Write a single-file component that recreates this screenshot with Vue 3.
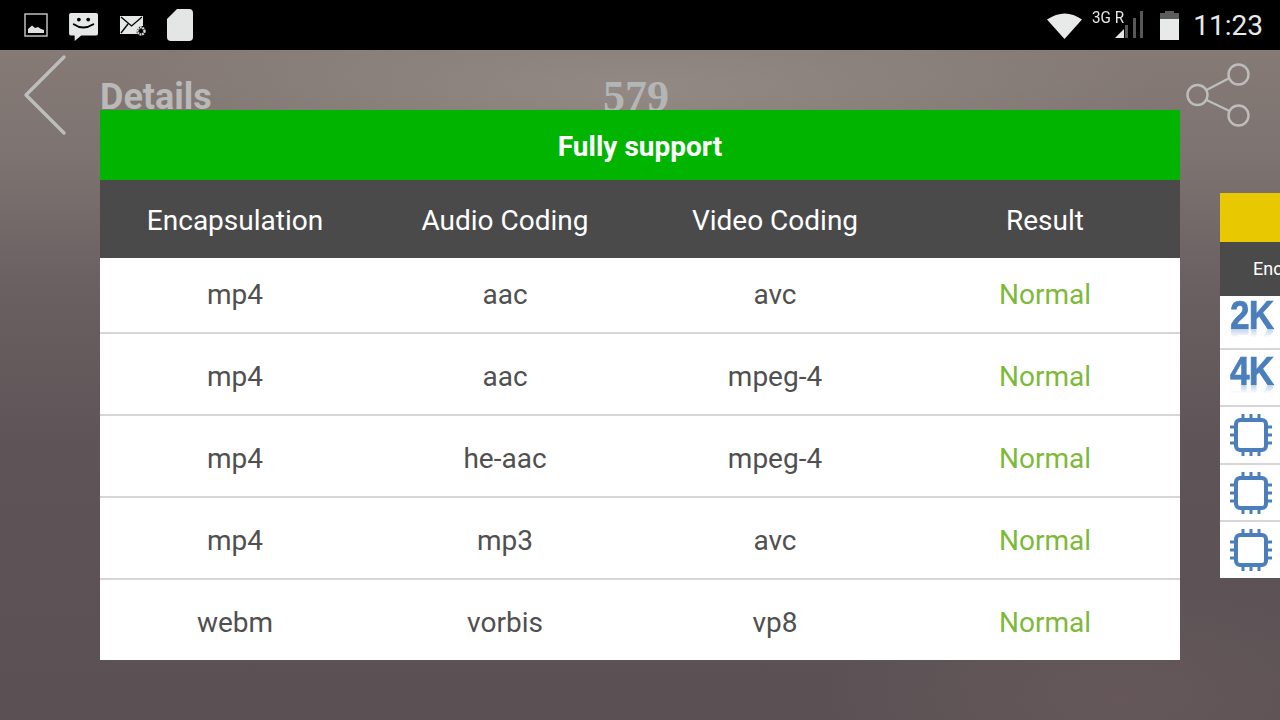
<script setup>
const rows = [
  ['mp4', 'aac', 'avc'],
  ['mp4', 'aac', 'mpeg-4'],
  ['mp4', 'he-aac', 'mpeg-4'],
  ['mp4', 'mp3', 'avc'],
  ['webm', 'vorbis', 'vp8'],
]
const heads = ['Encapsulation', 'Audio Coding', 'Video Coding', 'Result']
const chipPins = [13, 21, 29]
</script>

<template>
  <div class="screen">
    <div class="status">
      <div class="status-left">
        <svg class="ic" width="24" height="24" viewBox="0 0 24 24">
          <rect x="1" y="1" width="22" height="22" fill="none" stroke="#c9cbcb" stroke-width="1.4" />
          <path d="M4 20v-4l4-3.500 3 2.500 3-1 3 2 3 1v3z" fill="#dfe1e1" />
        </svg>
        <svg class="ic" width="30" height="28" viewBox="0 0 32 30">
          <path d="M2 0h27a2 2 0 0 1 2 2v20a2 2 0 0 1-2 2H13l-7 6v-6H2a2 2 0 0 1-2-2V2a2 2 0 0 1 2-2z" fill="#e6e8e8" />
          <circle cx="10.500" cy="7" r="2" fill="#000" />
          <circle cx="20.500" cy="7" r="2" fill="#000" />
          <path d="M5 12q10 7 21 0" fill="none" stroke="#000" stroke-width="2" stroke-linecap="round" />
        </svg>
        <svg class="ic" width="26" height="20" viewBox="0 0 26 20">
          <path d="M0 0h23v10a6 6 0 0 0-6 8H0z" fill="#e6e8e8" />
          <path d="M1 1l10.500 9L22 1M1 17l7-9" fill="none" stroke="#000" stroke-width="1.300" />
          <circle cx="21" cy="15" r="3.500" fill="none" stroke="#d5d7d7" stroke-width="2.400" stroke-dasharray="1.800 0.700" />
        </svg>
        <svg class="ic" width="26" height="32" viewBox="0 0 26 32">
          <path d="M10 0h12a4 4 0 0 1 4 4v24a4 4 0 0 1-4 4H4a4 4 0 0 1-4-4V10z" fill="#e4e6e6" />
        </svg>
      </div>
      <div class="status-right">
        <svg class="wifi" width="36" height="28" viewBox="0 0 36 28">
          <path d="M0 8.500Q18-3.500 35 8.500L17.500 28z" fill="#e8eaea" />
        </svg>
        <div class="net">
          <span class="net-label">3G R</span>
          <svg class="bars" width="30" height="28" viewBox="0 0 30 28">
            <path d="M0 27l9-9v9z" fill="#e6e8e8" />
            <path d="M10 27V14h3v13zM18 27V7h3v20zM25 27V0h3v27z" fill="#585858" />
          </svg>
        </div>
        <svg class="batt" width="19" height="29" viewBox="0 0 19 29">
          <path d="M5 2V0h9v2h5v7H0V2z" fill="#5c5c5c" />
          <rect y="8" width="19" height="21" fill="#e8eaea" />
        </svg>
        <span class="clock">11:23</span>
      </div>
    </div>

    <div class="body">
      <header class="bar">
        <svg class="back" width="44" height="82" viewBox="0 0 44 82">
          <path d="M41 3L3 41l38 38" fill="none" stroke="#bdbdbb" stroke-width="3.400" stroke-linecap="round" stroke-linejoin="round" />
        </svg>
        <span class="title">Details</span>
        <span class="num">579</span>
        <svg class="share" width="66" height="64" viewBox="0 0 66 64">
          <g fill="none" stroke="#bdbdbb" stroke-width="2.400">
            <circle cx="11.500" cy="32" r="10" />
            <circle cx="52.500" cy="11.500" r="10" />
            <circle cx="52.500" cy="52.500" r="10" />
            <path d="M20.500 27l23-12M20.500 37l23 11" />
          </g>
        </svg>
      </header>

      <div class="stage">
        <section class="dialog">
          <div class="banner">Fully support</div>
          <div class="thead">
            <span v-for="h in heads" :key="h">{{ h }}</span>
          </div>
          <div v-for="(r, i) in rows" :key="i" class="row">
            <span v-for="(c, j) in r" :key="j">{{ c }}</span>
            <span class="ok">Normal</span>
          </div>
        </section>

        <aside class="side">
          <div class="side-banner"></div>
          <div class="side-head">Encapsulation</div>
          <div class="side-row res-2k">
            <span class="res">2K</span>
          </div>
          <div class="side-row res-4k">
            <span class="res">4K</span>
          </div>
          <div v-for="n in 3" :key="n" class="side-row chip-row">
            <svg width="42" height="42" viewBox="0 0 42 42">
              <rect x="6" y="6" width="30" height="30" rx="4" fill="none" stroke="#4a7fbb" stroke-width="4" />
              <g stroke="#4a7fbb" stroke-width="3">
                <path v-for="p in chipPins" :key="p" :d="`M${p} 0v6M${p} 36v6M0 ${p}h6M36 ${p}h6`" />
              </g>
            </svg>
          </div>
        </aside>
      </div>
    </div>
  </div>
</template>

<style>
html, body { margin: 0; background: #000; }
</style>

<style scoped>
.screen {
  width: 1280px;
  height: 720px;
  overflow: hidden;
  display: flex;
  flex-direction: column;
  font-family: Roboto, "Liberation Sans", sans-serif;
}
.status {
  height: 50px;
  flex: none;
  background: #000;
  display: flex;
  justify-content: space-between;
  align-items: center;
  padding: 0 17px 0 24px;
}
.status-left { display: flex; align-items: center; }
.status-left .ic { margin-right: 21px; }
.status-left .ic:nth-child(2) { margin-top: 4px; }
.status-left .ic:nth-child(3) { margin-top: 2px; }
.status-right { display: flex; align-items: center; }
.wifi { margin-right: 9px; }
.net { position: relative; width: 53px; height: 34px; margin-right: 15px; }
.net-label {
  position: absolute; left: 0; top: 0;
  font-size: 16px; line-height: 19px; color: #e6e8e8; white-space: nowrap;
  transform: scaleX(0.95); transform-origin: left;
}
.bars { position: absolute; left: 23px; top: 3px; }
.batt { margin-right: 14px; }
.clock { font-size: 28px; color: #e8eaea; }

.body {
  position: relative;
  flex: 1;
  background:
    radial-gradient(ellipse 520px 90px at 640px 40px, rgba(160, 152, 146, 0.55), rgba(160, 152, 146, 0) 100%),
    radial-gradient(ellipse 300px 120px at 1120px 650px, rgba(120, 100, 100, 0.35), rgba(120, 100, 100, 0) 100%),
    linear-gradient(180deg, #857a76 0%, #7d7370 16%, #6a6062 35%, #5e5457 60%, #5b5154 100%);
}
.bar { position: relative; height: 60px; }
.back { position: absolute; left: 23px; top: 4px; }
.title {
  position: absolute; left: 100px; top: 26px;
  font-size: 36px; font-weight: 700; line-height: 42px; color: #b9b9b8;
}
.num {
  position: absolute; left: 603px; top: 26px;
  font-family: "Liberation Serif", serif;
  font-size: 44px; font-weight: 700; line-height: 42px; color: #b4b6b6;
}
.share { position: absolute; left: 1186px; top: 13px; }

.stage {
  position: absolute;
  inset: 0;
  display: flex;
  align-items: center;
  gap: 40px;
  padding-left: 100px;
  overflow: hidden;
}
.dialog {
  flex: none;
  width: 1080px;
  background: #fff;
}
.banner {
  box-sizing: border-box;
  height: 70px;
  padding-top: 3px;
  background: #00b400;
  color: #fff;
  font-size: 28px;
  font-weight: 700;
  display: flex;
  align-items: center;
  justify-content: center;
}
.thead, .row {
  box-sizing: border-box;
  display: grid;
  grid-template-columns: repeat(4, 270px);
  text-align: center;
  align-items: center;
  font-size: 28px;
}
.thead {
  height: 78px;
  padding-top: 3px;
  background: #4a4a4a;
  color: #fff;
}
.row {
  height: 82px;
  padding-top: 4px;
  border-bottom: 2px solid #d6d6d6;
  color: #505050;
}
.thead + .row { height: 76px; padding-top: 0; padding-bottom: 2px; }
.row:last-child { border-bottom: 0; height: 80px; }
.ok { color: #7db93a; }

.side {
  flex: none;
  width: 200px;
  margin-top: 1px;
  background: #fff;
  overflow: hidden;
}
.side-banner { height: 49px; background: #e8c800; }
.side-head {
  height: 54px;
  background: #4a4a4a;
  color: #fff;
  font-size: 18px;
  line-height: 54px;
  padding-left: 33px;
  white-space: nowrap;
}
.side-row {
  box-sizing: border-box;
  height: 58px;
  border-bottom: 2px solid #d6d6d6;
  padding-left: 10px;
  display: flex;
  align-items: center;
}
.res-2k { height: 54px; padding-bottom: 15px; }
.res-4k { height: 57px; padding-bottom: 14px; }
.chip-row:nth-last-child(2) { height: 57px; }
.chip-row:last-child { border-bottom: 0; height: 56px; }
.res {
  font-family: "Liberation Sans", sans-serif;
  font-weight: 700;
  font-size: 41px;
  line-height: 30px;
  letter-spacing: -1px;
  color: #4a7fbb;
  -webkit-text-stroke: 0.7px #4a7fbb;
  transform: scaleX(0.86);
  transform-origin: left;
  -webkit-box-reflect: below -1px linear-gradient(transparent 72%, rgba(255, 255, 255, 0.35));
}
</style>
